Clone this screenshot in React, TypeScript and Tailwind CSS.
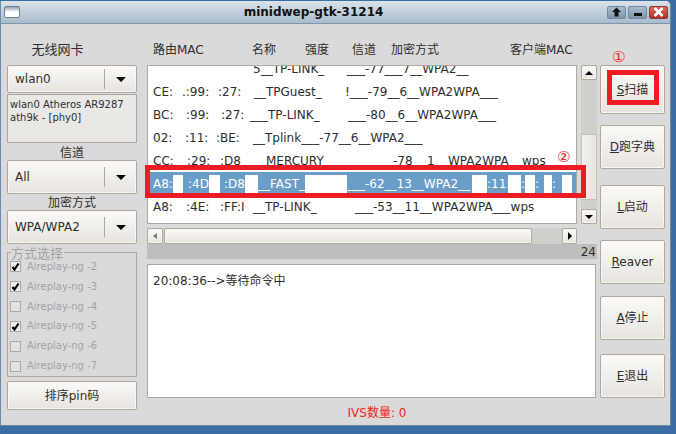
import React from 'react';

type Cell = [string, string, string?];

// one list row: text, width class, optional extra class (white = masked)
const rows: { cells: Cell[]; selected?: boolean }[] = [
  { cells: [['', 'w-[100px]'], ['5__TP-LINK_', 'w-[94px]'], ['___-77___7__WPA2__', 'w-[200px]']] },
  { cells: [['CE:', 'w-[29px]'], ['.:99:', 'w-[36px]'], [':27:', 'w-[36px]'], ['__TPGuest_', 'w-[91px]'], ['!___-79__6__WPA2WPA___', 'w-[200px]']] },
  { cells: [['BC:', 'w-[33px]'], [':99:', 'w-[35px]'], [':27:', 'w-[29px]'], ['___TP-LINK_', 'w-[98px]'], ['___-80__6__WPA2WPA___', 'w-[200px]']] },
  { cells: [['02:', 'w-[32px]'], [':11:', 'w-[31px]'], [':BE:', 'w-[37px]'], ['__Tplink___-77__6__WPA2___', 'w-[250px]']] },
  { cells: [['CC:', 'w-[34px]'], [':29:', 'w-[33px]'], [':D8', 'w-[46px]'], ['MERCURY', 'w-[127px]'], ['-78', 'w-[34px]'], ['1', 'w-[21px]'], ['WPA2WPA', 'w-[74px]'], ['wps', 'w-[30px]']] },
  {
    selected: true,
    cells: [
      ['A8:', 'w-[20px]'], ['', 'w-[10px]', 'bg-white'], ['', 'w-[5px]'], [':4D:', 'w-[21px]'], ['', 'w-[11px]', 'bg-white'], ['', 'w-[4px]'], [':D8:', 'w-[21px]'], ['', 'w-[13px]', 'bg-white'],
      ['__FAST_', 'w-[47px]'], ['', 'w-[42px]', 'bg-white'], ['___-62__13__WPA2__', 'w-[125px]'], ['', 'w-[15px]', 'bg-white'], [':11:', 'w-[21px]'], ['', 'w-[13px]', 'bg-white'], [':', 'w-[4px]'],
      ['', 'w-[10px]', 'bg-white'], [':', 'w-[9px]'], ['', 'w-[8px]', 'bg-white'], [':', 'w-[10px]'], ['', 'w-[10px]', 'bg-white'],
    ],
  },
  { cells: [['A8:', 'w-[33px]'], [':4E:', 'w-[34px]'], [':FF:I', 'w-[33px]'], ['__TP-LINK_', 'w-[102px]'], ['___-53__11__WPA2WPA___wps', 'w-[200px]']] },
];

const headers: [string, string][] = [
  ['路由MAC', 'w-[99px]'], ['名称', 'w-[53px]'], ['强度', 'w-[47px]'], ['信道', 'w-[39px]'], ['加密方式', 'w-[119px]'], ['客户端MAC', 'w-[80px]'],
];

const checks: [string, boolean][] = [
  ['Aireplay-ng -2', true], ['Aireplay-ng -3', true], ['Aireplay-ng -4', false],
  ['Aireplay-ng -5', true], ['Aireplay-ng -6', false], ['Aireplay-ng -7', false],
];

const btn = 'border border-[#aea89e] rounded-[2px] bg-gradient-to-b from-[#fbfaf8] to-[#e7e4df] shadow-[inset_0_0_0_1px_#f7f6f3]';

function Combo({ label, h }: { label: string; h: string }) {
  return (
    <div className={`${btn} ${h} flex items-center`}>
      <span className="flex-1 pl-[7px]">{label}</span>
      <div className="w-px h-[20px] bg-[#aea89e]"></div>
      <div className="w-[31px] flex justify-center">
        <div className="w-0 h-0 border-x-[5px] border-x-transparent border-t-[5px] border-t-black"></div>
      </div>
    </div>
  );
}

function SideButton({ u, rest, h }: { u: string; rest: string; h: string }) {
  return (
    <div className={`${btn} ${h} flex items-center justify-center`}>
      <span><span className="underline">{u}</span>{rest}</span>
    </div>
  );
}

function WinButton({ red, children }: { red?: boolean; children: React.ReactNode }) {
  return (
    <div className={`w-[19px] h-[13px] rounded-[2px] border flex items-center justify-center ${red ? 'border-[#8c3a3a] bg-gradient-to-b from-[#dc6a62] to-[#b32d25]' : 'border-[#72889c] bg-gradient-to-b from-[#a9bccd] to-[#7e95aa]'}`}>
      {children}
    </div>
  );
}

export default function App() {
  return (
    <div className="relative w-[676px] h-[434px] overflow-hidden bg-[#3a6ea5] text-[12px] leading-[14px] text-[#2e2e2e] font-['DejaVu_Sans','Noto_Sans_CJK_SC',sans-serif]">
      <div className="w-[671px] h-[425px] mt-px flex flex-col rounded-tr-[5px] overflow-hidden border-l border-r border-b border-[#6d8aa6] bg-[#dadada]">
        {/* title bar */}
        <div className="h-[23px] shrink-0 flex items-center pl-[3px] pr-[2px] bg-gradient-to-b from-[#dbe3ea] to-[#a9bccd] border-b border-[#7e95aa]">
          <div className="w-[16px] h-[12px] rounded-[2px] border border-[#6f7f8f] bg-gradient-to-b from-[#8ea3b5] via-white to-white"></div>
          <div className="flex-1 text-center font-bold text-[12px] text-[#111]">minidwep-gtk-31214</div>
          <div className="flex gap-[2px]">
            <WinButton>
              <svg width="11" height="10" viewBox="0 0 11 10"><path d="M5.5 0.5 L10 5 H7.5 V9.5 H3.5 V5 H1 Z" fill="#111" /></svg>
            </WinButton>
            <WinButton>
              <div className="w-[8px] h-[3px] bg-[#111] mt-[5px]"></div>
            </WinButton>
            <WinButton red>
              <svg width="11" height="10" viewBox="0 0 11 10"><path d="M1.5 1 L9.5 9 M9.5 1 L1.5 9" stroke="#fff" strokeWidth="2.6" /></svg>
            </WinButton>
          </div>
        </div>

        <div className="flex-1 flex pl-[6px]">
          {/* left column */}
          <div className="w-[130px] shrink-0 flex flex-col">
            <div className="h-[41px] pt-[19px] text-center pr-[29px] text-[13px] leading-[14px]">无线网卡</div>
            <Combo label="wlan0" h="h-[28px]" />
            <div className="mt-px h-[49px] border border-[#aea89e] bg-[#eae8e4] pl-[2px] pt-[3px] text-[10px] leading-[13px]">
              wlan0 Atheros AR9287<br />ath9k - [phy0]
            </div>
            <div className="h-[16px] mt-[1px] text-center leading-[18px]">信道</div>
            <Combo label="All" h="h-[34px]" />
            <div className="h-[16px] text-center leading-[18px]">加密方式</div>
            <Combo label="WPA/WPA2" h="h-[34px]" />
            <div className="relative mt-[8px] h-[125px] border border-[#aea89e] pl-[2px] pt-[4px] text-[10px] text-[#a3a3a3] flex flex-col">
              <span className="absolute -top-[6px] left-[3px] bg-[#dadada] pr-px text-[13px]">方式选择</span>
              {checks.map(([name, on]) => (
                <div key={name} className="h-[20px] flex items-center gap-[6px]">
                  <div className={`w-[11px] h-[11px] border border-[#aea89e] flex items-center justify-center ${on ? 'bg-[#f0eeea]' : 'bg-[#e4e2de]'}`}>
                    {on && (
                      <svg width="9" height="9" viewBox="0 0 9 9"><path d="M1.5 5 L3.5 7.5 L7.5 1.5" stroke="#000" strokeWidth="2.2" fill="none" /></svg>
                    )}
                  </div>
                  <span>{name}</span>
                </div>
              ))}
            </div>
            <div className={`${btn} mt-[4px] h-[29px] flex items-center justify-center`}>排序pin码</div>
          </div>

          {/* middle column */}
          <div className="w-[450px] ml-[10px] shrink-0 flex flex-col">
            <div className="h-[41px] pt-[19px] pl-[6px] flex leading-[14px]">
              {headers.map(([t, w]) => (
                <span key={t} className={`${w} shrink-0 whitespace-nowrap`}>{t}</span>
              ))}
            </div>
            <div className="flex h-[159px]">
              <div className="w-[430px] border border-[#aea89e] bg-white overflow-hidden pl-[2px]">
                <div className="-mt-[9px]">
                  {rows.map((row, i) => (
                    <div key={i} className={`h-[23px] flex items-center pl-[3px] text-[12px] whitespace-nowrap ${row.selected ? 'bg-[#6b9dc9] text-white' : ''}`}>
                      {row.cells.map(([t, w, extra], j) => (
                        <span key={j} className={`${w} shrink-0 ${extra ? `${extra} h-[18px]` : ''}`}>{t}</span>
                      ))}
                    </div>
                  ))}
                </div>
              </div>
              {/* vertical scrollbar */}
              <div className="ml-[4px] w-[16px] flex flex-col bg-[#cfcfcc]">
                <div className={`${btn} h-[15px] flex items-center justify-center`}>
                  <div className="w-0 h-0 border-x-[4px] border-x-transparent border-b-[4px] border-b-black"></div>
                </div>
                <div className="h-[54px]"></div>
                <div className="h-[66px] bg-gradient-to-r from-[#f2f1ee] to-[#e7e4df] border border-[#c4c0b8]"></div>
                <div className="flex-1"></div>
                <div className={`${btn} h-[15px] flex items-center justify-center`}>
                  <div className="w-0 h-0 border-x-[4px] border-x-transparent border-t-[4px] border-t-black"></div>
                </div>
              </div>
            </div>
            {/* horizontal scrollbar */}
            <div className="mt-[4px] w-[430px] h-[16px] flex bg-[#cfcfcc]">
              <div className={`${btn} w-[16px] flex items-center justify-center`}>
                <div className="w-0 h-0 border-y-[3px] border-y-transparent border-r-[4px] border-r-[#777]"></div>
              </div>
              <div className={`${btn} ml-px w-[368px]`}></div>
              <div className="flex-1"></div>
              <div className={`${btn} w-[15px] flex items-center justify-center`}>
                <div className="w-0 h-0 border-y-[4px] border-y-transparent border-l-[4px] border-l-black"></div>
              </div>
            </div>
            <div className="h-[15px] bg-[#bebebe] text-right pr-px leading-[17px] text-[12px]">24</div>
            <div className="mt-[5px] w-[449px] h-[134px] border border-[#aea89e] bg-white px-[5px] pt-[8px] leading-[16px]">20:08:36--&gt;等待命令中</div>
            <div className="mt-[8px] pl-[10px] text-center text-[#f01c1c] leading-[14px]">IVS数量: 0</div>
          </div>

          {/* right column */}
          <div className="w-[65px] ml-[3px] shrink-0 flex flex-col pt-[41px]">
            <SideButton u="S" rest="扫描" h="h-[49px]" />
            <div className="mt-[11px]"><SideButton u="D" rest="跑字典" h="h-[44px]" /></div>
            <div className="mt-[16px]"><SideButton u="L" rest="启动" h="h-[44px]" /></div>
            <div className="mt-[11px]"><SideButton u="R" rest="eaver" h="h-[44px]" /></div>
            <div className="mt-[12px]"><SideButton u="A" rest="停止" h="h-[44px]" /></div>
            <div className="mt-[14px]"><SideButton u="E" rest="退出" h="h-[44px]" /></div>
          </div>
        </div>
      </div>

      {/* red annotations drawn over the shot */}
      <div className="absolute left-[607px] top-[70px] w-[52px] h-[35px] border-[5px] border-[#ed1c24]"></div>
      <div className="absolute left-[145px] top-[165px] w-[441px] h-[33px] border-[5px] border-[#ed1c24]"></div>
      <span className="absolute left-[612px] top-[50px] text-[15px] leading-[15px] text-[#ed1c24]">①</span>
      <span className="absolute left-[557px] top-[150px] text-[15px] leading-[15px] text-[#ed1c24]">②</span>
    </div>
  );
}
